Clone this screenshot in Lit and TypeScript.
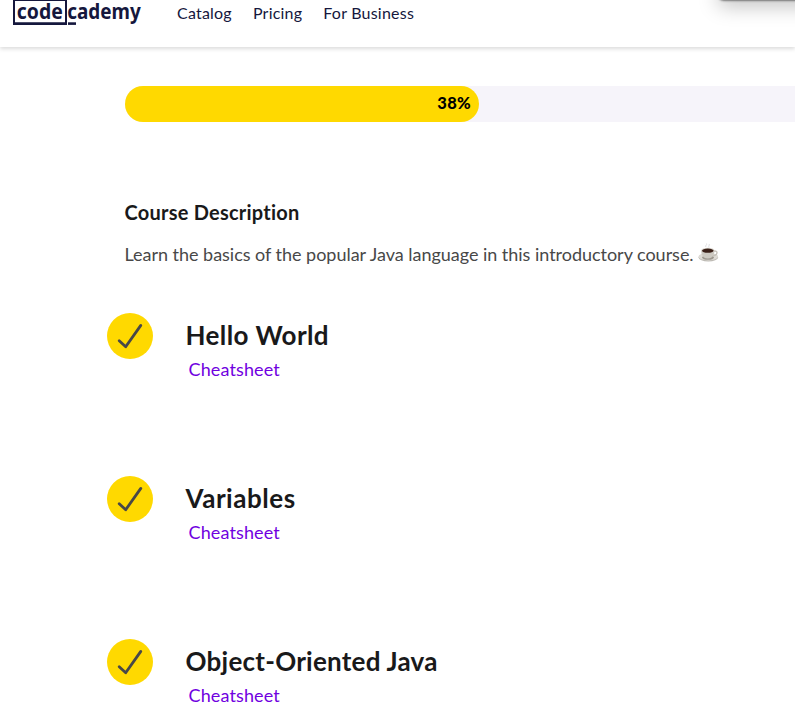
import { LitElement, html, css, svg } from "lit";
import { customElement, property } from "lit/decorators.js";

@customElement("site-logo")
class SiteLogo extends LitElement {
  static styles = css`
    :host { display: block; width: 130px; height: 27px; }
    svg { display: block; overflow: visible; }
    text { font-family: "Noto Sans", "Open Sans", sans-serif; font-weight: 700; font-size: 21.5px; fill: #15173d; }
  `;
  render() {
    return html`<svg width="130" height="27" viewBox="0 0 130 27" role="img" aria-label="codecademy">
      <path d="M1 0H53V23.5H1Z" fill="none" stroke="#15173d" stroke-width="2" />
      <path d="M0 23.8H54" stroke="#15173d" stroke-width="2.4" />
      <text x="3.8" y="19" textLength="46" lengthAdjust="spacingAndGlyphs">code</text>
      <text x="54.3" y="19" textLength="73.5" lengthAdjust="spacingAndGlyphs">cademy</text>
      <rect x="55" y="22.3" width="8" height="2.6" fill="#15173d" />
    </svg>`;
  }
}

@customElement("site-header")
class SiteHeader extends LitElement {
  static styles = css`
    :host { display: block; position: relative; z-index: 1; }
    header {
      height: 47px; display: flex; align-items: flex-start; padding-left: 13px; box-sizing: border-box;
      background: #fff; box-shadow: 0 2px 4px rgba(0, 0, 0, 0.14);
    }
    nav { display: flex; gap: 21px; margin-left: 34px; padding-top: 2px; }
    a { font: 16px/22px Lato, sans-serif; color: #15173d; text-decoration: none; white-space: nowrap; letter-spacing: 0.22px; }
    .popup {
      position: absolute; top: -20px; left: 718px; right: -40px; height: 20px; border-radius: 6px;
      background: #999; box-shadow: 0 0 2px 1px rgba(0, 0, 0, 0.45), 0 6px 20px rgba(0, 0, 0, 0.25);
    }
    .clip { position: absolute; inset: 0; overflow: hidden; pointer-events: none; }
  `;
  render() {
    return html`<header>
      <site-logo></site-logo>
      <nav>
        <a>Catalog</a>
        <a>Pricing</a>
        <a>For Business</a>
      </nav>
      <div class="clip"><div class="popup"></div></div>
    </header>`;
  }
}

@customElement("progress-bar")
class ProgressBar extends LitElement {
  @property({ type: Number }) value = 0;
  static styles = css`
    :host { display: block; width: 932px; }
    .track { height: 36px; border-radius: 18px; background: #f6f4fa; }
    .fill {
      height: 36px; border-radius: 18px; background: #ffd900; box-sizing: border-box; padding-right: 8px;
      text-align: right; font: 900 16.5px/35px Lato, sans-serif; letter-spacing: 0.4px; color: #000;
    }
  `;
  render() {
    return html`<div class="track"><div class="fill" style="width:${this.value}%">${this.value}%</div></div>`;
  }
}

@customElement("course-module")
class CourseModule extends LitElement {
  @property() name = "";
  @property({ type: Number }) spacing = 0;
  static styles = css`
    :host { display: flex; height: 163px; align-items: flex-start; }
    svg { display: block; flex: none; width: 46px; height: 46px; margin-right: 32.5px; }
    h2 { margin: 5px 0 0; font: 700 26px/34px Lato, sans-serif; color: #19191a; white-space: nowrap; }
    a { display: block; margin: 5px 0 0 3px; font: 18px/24px Lato, sans-serif; color: #7000e0; letter-spacing: 0.13px; }
  `;
  render() {
    return html`<svg viewBox="0 0 46 46">
        <circle cx="23" cy="23" r="23" fill="#ffd900" />
        <path d="M12.2 27.7L18.7 33.7L33.8 12.4" fill="none" stroke="#484848" stroke-width="2.8" stroke-linecap="round" stroke-linejoin="round" />
      </svg>
      <div>
        <h2 style="letter-spacing:${this.spacing}px">${this.name}</h2>
        <a>Cheatsheet</a>
      </div>`;
  }
}

const cup = svg`
  <path d="M8 4C6.5 2.5 9.5 2 8.5 .5M11 4.5C10 3 12 2.4 11.2 1" fill="none" stroke="#dedee0" stroke-width="1"/>
  <ellipse cx="10.3" cy="14.4" rx="9.8" ry="4.2" fill="#bdbab4"/>
  <ellipse cx="10.3" cy="13.6" rx="9.8" ry="3.8" fill="#dedbd5"/>
  <ellipse cx="10" cy="14.6" rx="6" ry="2.2" fill="#9c978e"/>
  <path d="M15.5 8.3C20.5 6.8 20 12.5 14.8 12.7" fill="none" stroke="#c6c2ba" stroke-width="1.4"/>
  <path d="M3.2 7.4C3.2 13 6 15.6 9.8 15.6S16.4 13 16.4 7.4Z" fill="#cdc9c1"/>
  <ellipse cx="9.8" cy="7.4" rx="6.6" ry="2.7" fill="#dcd8d0"/>
  <ellipse cx="9.8" cy="7.7" rx="5.8" ry="2.1" fill="#3a2018"/>`;

@customElement("app-root")
class AppRoot extends LitElement {
  static styles = css`
    :host { display: block; height: 722px; overflow: hidden; background: #fff; }
    main { padding: 39px 0 0 125px; }
    h1 { margin: 77px 0 0 -0.5px; font: 700 20px/26px Lato, sans-serif; color: #19191a; letter-spacing: 0.23px; }
    p { display: flex; align-items: center; margin: 17px 0 0 -0.5px; font: 18px/24px Lato, sans-serif; letter-spacing: -0.025px; color: #484848; white-space: nowrap; }
    .cup { width: 21px; height: 19px; margin: -4px 0 0 4px; }
    .modules { margin: 47px 0 0 -18px; }
  `;
  render() {
    return html`<site-header></site-header>
      <main>
        <progress-bar .value=${38}></progress-bar>
        <h1>Course Description</h1>
        <p><span>Learn the basics of the popular Java language in this introductory course.</span>
          <svg class="cup" viewBox="0 0 21 19">${cup}</svg></p>
        <section class="modules">
          <course-module .name=${"Hello World"} .spacing=${0.4}></course-module>
          <course-module .name=${"Variables"} .spacing=${0.55}></course-module>
          <course-module .name=${"Object-Oriented Java"} .spacing=${0.24}></course-module>
        </section>
      </main>`;
  }
}
